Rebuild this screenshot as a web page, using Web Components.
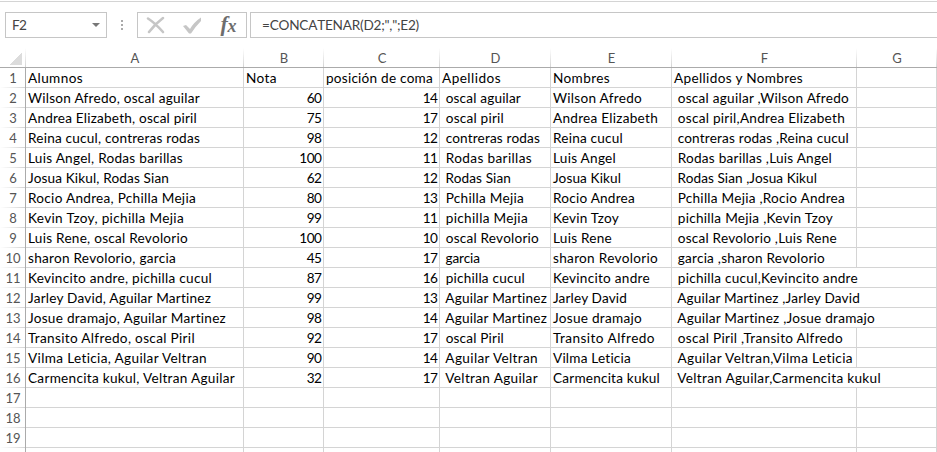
<!DOCTYPE html>
<html lang="es">
<head>
<meta charset="utf-8" />
<title>Alumnos</title>
<style>
  body {
    margin: 0;
    width: 937px;
    height: 452px;
    overflow: hidden;
    background: #fff;
    color: #000;
    font: 13.6px/20px Lato, sans-serif;
    font-kerning: normal;
    font-variant-ligatures: none;
    --line: #d4d4d4;
    --edge: #ababab;
    --box: #c6c6c6;
    --muted: #444;
  }
</style>
</head>
<body>
<sheet-app></sheet-app>
<script>
const COLUMNS = ["A", "B", "C", "D", "E", "F", "G"];
const ROW_COUNT = 20;

// each text is followed by its width in pixels
const ROWS = [
  [["Alumnos", 55], ["Nota", 31], ["posición de coma", 107], ["Apellidos", 59], ["Nombres", 57], ["Apellidos y Nombres", 129]],
  [["Wilson Afredo, oscal aguilar", 172], 60, 14, [" oscal aguilar", 79], ["Wilson Afredo", 89], [" oscal aguilar ,Wilson Afredo", 175]],
  [["Andrea Elizabeth, oscal piril", 169], 75, 17, [" oscal piril", 62], ["Andrea Elizabeth", 105], [" oscal piril,Andrea Elizabeth", 171]],
  [["Reina cucul, contreras rodas", 172], 98, 12, [" contreras rodas", 98], ["Reina cucul", 70], [" contreras rodas ,Reina cucul", 175]],
  [["Luis Angel, Rodas barillas", 155], 100, 11, [" Rodas barillas", 90], ["Luis Angel", 63], [" Rodas barillas ,Luis Angel", 158]],
  [["Josua Kikul, Rodas Sian", 141], 62, 12, [" Rodas Sian", 69], ["Josua Kikul", 68], [" Rodas Sian ,Josua Kikul", 143]],
  [["Rocio Andrea, Pchilla Mejia", 168], 80, 13, [" Pchilla Mejia", 82], ["Rocio Andrea", 82], [" Pchilla Mejia ,Rocio Andrea", 171]],
  [["Kevin Tzoy, pichilla Mejia", 156], 99, 11, [" pichilla Mejia", 86], ["Kevin Tzoy", 66], [" pichilla Mejia ,Kevin Tzoy", 159]],
  [["Luis Rene, oscal Revolorio", 160], 100, 10, [" oscal Revolorio", 97], ["Luis Rene", 59], [" oscal Revolorio ,Luis Rene", 163]],
  [["sharon Revolorio, garcia", 148], 45, 17, [" garcia", 38], ["sharon Revolorio", 105], [" garcia ,sharon Revolorio", 151]],
  [["Kevincito andre, pichilla cucul", 184], 87, 16, [" pichilla cucul", 83], ["Kevincito andre", 97], [" pichilla cucul,Kevincito andre", 184]],
  [["Jarley David, Aguilar Martinez", 183], 99, 13, [" Aguilar Martinez", 105], ["Jarley David", 74], [" Aguilar Martinez ,Jarley David", 186]],
  [["Josue dramajo, Aguilar Martinez", 198], 98, 14, [" Aguilar Martinez", 105], ["Josue dramajo", 89], [" Aguilar Martinez ,Josue dramajo", 201]],
  [["Transito Alfredo, oscal Piril", 167], 92, 17, [" oscal Piril", 62], ["Transito Alfredo", 102], [" oscal Piril ,Transito Alfredo", 169]],
  [["Vilma Leticia, Aguilar Veltran", 179], 90, 14, [" Aguilar Veltran", 96], ["Vilma Leticia", 78], [" Aguilar Veltran,Vilma Leticia", 179]],
  [["Carmencita kukul, Veltran Aguilar", 207], 32, 17, [" Veltran Aguilar", 96], ["Carmencita kukul", 107], [" Veltran Aguilar,Carmencita kukul", 207]],
];

// texts that run over into column G
const SPILLS = ["F11", "F12", "F13", "F16"];

class BaseElement extends HTMLElement {
  constructor() {
    super();
    this.attachShadow({ mode: "open" });
    this.shadowRoot.innerHTML = this.constructor.html;
  }
}

// a run of text tracked to an exact width
// (white-space is kept, so no line breaks around the slot)
class FitText extends BaseElement {
  static html = `<style>:host { display: inline-block; white-space: pre; }</style><slot></slot>`;

  connectedCallback() {
    const width = Number(this.getAttribute("width"));
    if (!width) return;
    const natural = this.getBoundingClientRect().width;
    this.style.letterSpacing = (width - natural) / this.textContent.length + "px";
  }
}
customElements.define("fit-text", FitText);

class NameBox extends BaseElement {
  static html = `
<style>
:host {
  display: flex;
  align-items: center;
  justify-content: space-between;
  box-sizing: border-box;
  width: 102px;
  height: 26px;
  padding: 0 6px;
  border: 1px solid var(--box);
  color: var(--muted);
}
</style>
<slot></slot>
<svg width="8" height="4" viewBox="0 0 8 4"><path d="M0 0h8L4 4z" fill="#777"/></svg>`;
}
customElements.define("name-box", NameBox);

class FormulaButtons extends BaseElement {
  static html = `
<style>
:host {
  display: block;
  box-sizing: border-box;
  width: 110px;
  height: 26px;
  border: 1px solid var(--box);
}
svg { display: block; overflow: visible; }
text {
  font-family: "Liberation Serif", serif;
  font-style: italic;
  font-weight: bold;
  fill: #6d6d6d;
}
</style>
<svg width="108" height="24" viewBox="138 13 108 24">
  <path d="M148 18.5Q155 23 163 32M163 18Q155 24 149 32" fill="none" stroke="#c6c6c6" stroke-width="2.6" stroke-linecap="round"/>
  <path d="M183 26l3-1 4 4Q194 22 201 17.5V21Q195 27 191 33.5h-2Z" fill="#c6c6c6"/>
  <text x="220.5" y="30.5" font-size="22">f</text>
  <text x="227.5" y="31.5" font-size="18">x</text>
</svg>`;
}
customElements.define("formula-buttons", FormulaButtons);

class FormulaBar extends BaseElement {
  static html = `
<style>
:host {
  display: flex;
  box-sizing: border-box;
  height: 47px;
  padding: 10px 0 0 5px;
  border-top: 1px solid var(--line);
  margin-top: 1px;
}
.grip {
  display: flex;
  flex-direction: column;
  justify-content: center;
  gap: 2px;
  width: 30px;
  height: 26px;
  align-items: center;
}
.grip i {
  width: 2px;
  height: 2px;
  background: #aaa;
}
.formula {
  flex: 1;
  box-sizing: border-box;
  height: 26px;
  line-height: 25px;
  margin-left: 3px;
  padding-left: 11px;
  border: 1px solid var(--box);
  border-right: 0;
  color: var(--muted);
}
::slotted(*) { font-kerning: none; }
</style>
<name-box><fit-text width="14">F2</fit-text></name-box>
<div class="grip"><i></i><i></i><i></i></div>
<formula-buttons></formula-buttons>
<div class="formula"><slot></slot></div>`;
}
customElements.define("formula-bar", FormulaBar);

class SheetHeading extends BaseElement {
  static html = `
<style>
:host {
  display: block;
  box-sizing: border-box;
  height: 20px;
  color: #555;
  font-size: 13px;
  text-align: center;
}
:host([kind="column"]) {
  border-bottom: 1px solid var(--edge);
  background: linear-gradient(#fff, var(--line)) right / 1px 100% no-repeat;
}
:host([kind="row"]) {
  padding-left: 1px;
  border-right: 1px solid var(--edge);
  background: linear-gradient(90deg, #fff, var(--line)) bottom / 100% 1px no-repeat;
}
:host([kind="corner"]) {
  border-bottom: 1px solid var(--edge);
  background:
    linear-gradient(135deg, transparent 50%, #dcdcdc 50%) 10px 5px / 12px 12px no-repeat,
    linear-gradient(#fff, var(--line)) right / 1px 100% no-repeat;
}
</style>
<slot></slot>`;
}
customElements.define("sheet-heading", SheetHeading);

class SheetCell extends BaseElement {
  static html = `
<style>
:host {
  display: block;
  box-sizing: border-box;
  height: 20px;
  min-width: 0;
  padding: 0 0 0 2px;
  border-right: 1px solid var(--line);
  border-bottom: 1px solid var(--line);
  white-space: nowrap;
}
:host([number]) {
  padding-right: 1.5px;
  text-align: right;
}
:host([spill]) { border-right: 0; }
</style>
<slot></slot>`;
}
customElements.define("sheet-cell", SheetCell);

class SheetGrid extends BaseElement {
  static html = `
<style>
:host {
  display: grid;
  grid-template-columns: 26px 218px 80px 116px 111px 121px 185px 80px;
  grid-auto-rows: 20px;
}
</style>`;

  connectedCallback() {
    let html = `<sheet-heading kind="corner"></sheet-heading>`;
    html += COLUMNS.map((name) => `<sheet-heading kind="column">${name}</sheet-heading>`).join("");
    for (let row = 1; row <= ROW_COUNT; row++) {
      html += `<sheet-heading kind="row">${row < ROW_COUNT ? row : ""}</sheet-heading>`;
      html += COLUMNS.map((name, i) => this.cell(name + row, ROWS[row - 1]?.[i])).join("");
    }
    this.shadowRoot.innerHTML += html;
  }

  cell(ref, value) {
    if (value === undefined) return `<sheet-cell></sheet-cell>`;
    if (typeof value === "number") {
      const width = String(value).length * 7.4;
      return `<sheet-cell number><fit-text width="${width}">${value}</fit-text></sheet-cell>`;
    }
    const spill = SPILLS.includes(ref) ? " spill" : "";
    return `<sheet-cell${spill}><fit-text width="${value[1]}">${value[0]}</fit-text></sheet-cell>`;
  }
}
customElements.define("sheet-grid", SheetGrid);

class SheetApp extends BaseElement {
  static html = `
<style>
:host {
  display: flow-root;
  height: 452px;
  overflow: hidden;
}
</style>
<formula-bar><fit-text width="157">=CONCATENAR(D2;",";E2)</fit-text></formula-bar>
<sheet-grid></sheet-grid>`;
}
customElements.define("sheet-app", SheetApp);
</script>
</body>
</html>
